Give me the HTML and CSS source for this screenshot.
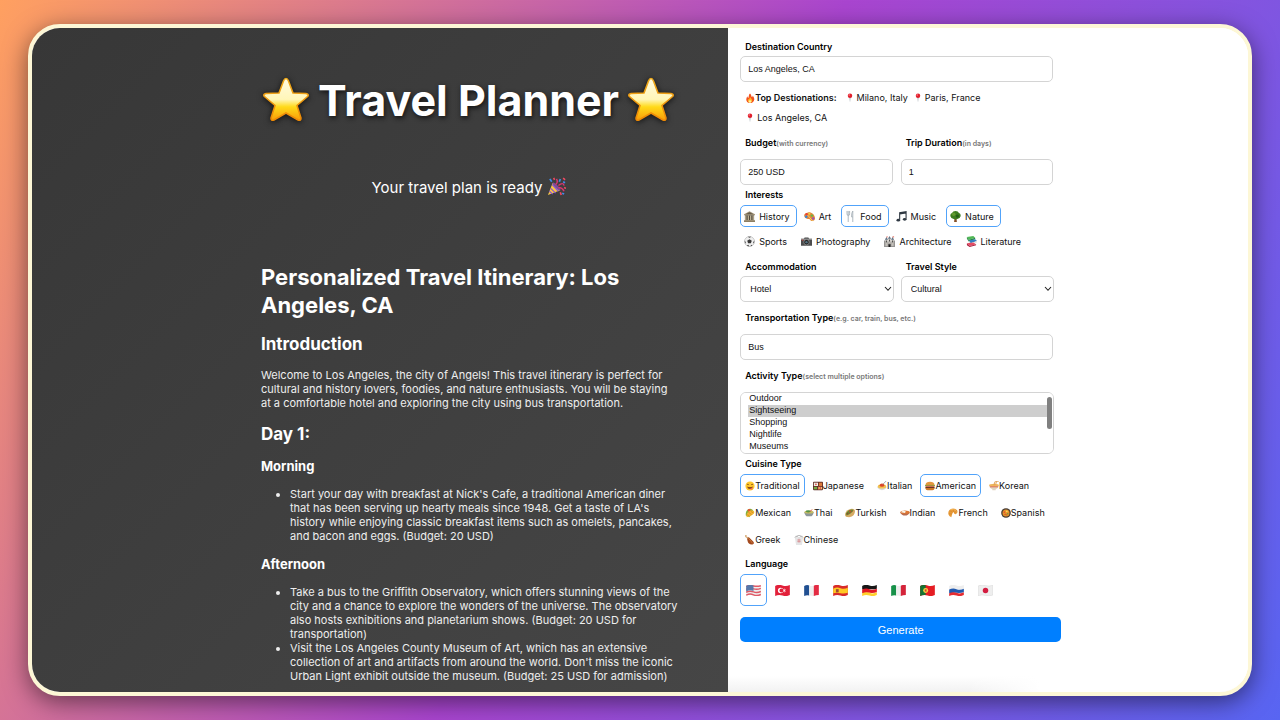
FILE: index.html
```html
<!DOCTYPE html>
<html lang="en">
<head>
<meta charset="utf-8">
<meta name="viewport" content="width=device-width, initial-scale=1">
<title>Travel Planner</title>
<link rel="stylesheet" href="styles.css">
</head>
<body>
<svg class="sprite" aria-hidden="true">
<defs>
<linearGradient id="gold" x1="0" y1="0" x2="0" y2="1"><stop offset="0" stop-color="#fffbe0"/><stop offset=".5" stop-color="#fff6b8"/><stop offset=".68" stop-color="#ffda19"/><stop offset="1" stop-color="#f99c08"/></linearGradient>
<linearGradient id="rim" x1="0" y1="0" x2="0" y2="1"><stop offset="0" stop-color="#eda91b"/><stop offset="1" stop-color="#ef8a05"/></linearGradient>
</defs>
<symbol id="star" viewBox="0 0 48 48"><path d="M24 2.500Q25.500 2.500 26.500 5L31 17 44 17.500Q48 18.500 45 21L35 29.500 39 42Q39 45 36 44L24 37 12 44Q9 45 9 42L13 29.500 3 21Q0 18.500 4 17.500L17 17 21.500 5Q22.500 2.500 24 2.500Z" fill="url(#gold)" stroke="url(#rim)" stroke-width="1.600"/></symbol>
<symbol id="party" viewBox="0 0 20 20"><path d="M1 19 6 6 14 14Z" fill="#f6c445"/><path d="M4 12 9 17M5.500 8 12 15M2.500 15 6 18" stroke="#8a55d7" stroke-width="1.300"/><ellipse cx="10" cy="10" rx="1.500" ry="5.500" transform="rotate(-45 10 10)" fill="#7a4a9c"/><path d="M9 8Q12 6 10 2M12 9Q17 5 18 9M12 11Q16 11 18 15" stroke="#d73570" stroke-width="1.500" fill="none"/><path d="M3 2 5 5M14 2 13 5M17 5 19 6M16 17 18 18" stroke="#3f8bea" stroke-width="1.800"/><path d="M7 1 8 3M17 1 19 3M14 16 15 19M18 11 20 12" stroke="#f04a62" stroke-width="1.700"/></symbol>
<symbol id="fire" viewBox="0 0 12 12"><path d="M6 .5C8 2 7 4 8.500 5Q9.500 4 9 3C14 9 9 12 6 12 1 12 .5 7 3 4Q3 6 4 6C5 4 4 2 6 .5Z" fill="#f4511e"/><path d="M6 4C6 6 9 7 8.500 9.500 8 12 4 12 3.500 9.500 3 8 4 7 4.500 7.500Q6 7 6 4Z" fill="#ffb928"/><ellipse cx="6" cy="10.200" rx="1.500" ry="1.500" fill="#fff0a0"/></symbol>
<symbol id="pin" viewBox="0 0 12 12"><path d="M5.400 5H6.600L6 11.500Z" fill="#87919a"/><circle cx="6" cy="3.200" r="2.700" fill="#e0202d"/><circle cx="5" cy="2.300" r=".9" fill="#ff8790"/></symbol>
<symbol id="museum" viewBox="0 0 12 12"><path d="M0 3.500 6 .3 12 3.500V4.500H0Z" fill="#a3957a"/><path d="M1.500 3.500 6 1.300 10.500 3.500Z" fill="#665c4a"/><path d="M1 4.500H11V10H1Z" fill="#51483b"/><path d="M2 5V10M4.700 5V10M7.300 5V10M10 5V10" stroke="#c8bd9e" stroke-width="1.300"/><path d="M0 10H12V12H0Z" fill="#9c8c6c"/><path d="M0 11H12" stroke="#655b48" stroke-width=".5"/></symbol>
<symbol id="art" viewBox="0 0 12 12"><path d="M4.500 1.500C8 1 12 4 12 8 12 11.500 8 11.500 7 10 6 7.500 4 9.500 2 8-1 6-.5 2 4.500 1.500Z" fill="#e08a3c"/><circle cx="2.800" cy="3.600" r="1.300" fill="#ee4034"/><circle cx="5.800" cy="3" r="1.200" fill="#f7d13b"/><circle cx="2.500" cy="6.300" r="1.300" fill="#3484dc"/><circle cx="8.600" cy="5" r="1.300" fill="#61b94a"/><circle cx="10" cy="8.200" r="1.300" fill="#a050b6"/><path d="M4 4.500 9.500 11" stroke="#f5ce65" stroke-width="1"/></symbol>
<symbol id="fork" viewBox="0 0 12 12"><path d="M2.200 0V3Q2.200 5 3.500 5V12M3.500 0V5Q5 5 5 3V0M8.500 12V0Q7 2 7.200 6.500H8.500" fill="none" stroke="#a7b1b9" stroke-width="1"/></symbol>
<symbol id="music" viewBox="0 0 12 12"><path d="M4 9.500V2L11 .8V8.500M4 3.200 11 2" fill="none" stroke="#303943" stroke-width="1.200"/><ellipse cx="2.500" cy="10" rx="2" ry="1.500" fill="#303943"/><ellipse cx="9.500" cy="9" rx="2" ry="1.500" fill="#303943"/></symbol>
<symbol id="tree" viewBox="0 0 12 12"><path d="M5 7H7L7.500 12H4.500Z" fill="#855027"/><path d="M6 0Q9 0 9.500 2 12 3 11.700 5.500 11 8.500 8 8.700 6 9.700 4 8.700 1 8.500.3 5.500 0 3 2.500 2 3 0 6 0Z" fill="#3d7d21"/><circle cx="4" cy="3.500" r="2" fill="#629b30"/><circle cx="8" cy="5.500" r="1.800" fill="#245f16"/></symbol>
<symbol id="ball" viewBox="0 0 12 12"><circle cx="6" cy="6" r="5.500" fill="#eee" stroke="#aaa" stroke-width=".6"/><path d="M6 3.500 8.500 5.300 7.500 8H4.500L3.500 5.300ZM4 .8H8L6 2ZM.7 5 2 6.800 1.200 8.500ZM11.300 5 10 6.800 10.800 8.500ZM3 10.500 4.500 9.500 6 11.500ZM9 10.500 8 9.500 7 11.300Z" fill="#383838"/></symbol>
<symbol id="camera" viewBox="0 0 12 12"><path d="M0 3H3L4 1.500H8L9 3H12V10.500H0Z" fill="#4c4c4d"/><path d="M0 3.500H12" stroke="#aaa"/><circle cx="6" cy="6.700" r="3" fill="#222" stroke="#aaa" stroke-width=".7"/><circle cx="6" cy="6.700" r="1.300" fill="#537282"/><path d="M1 4.500H2.500" stroke="#e14640"/></symbol>
<symbol id="castle" viewBox="0 0 12 12"><path d="M0 5H2V6H10V5H12V12H0Z" fill="#969493"/><path d="M1.500 3H4V11H1.500ZM8 3H10.500V11H8ZM4.700 1.800H7.300V12H4.700Z" fill="#c4c0ba"/><path d="M1 4 2.700 1 4.300 4ZM7.700 4 9.300 1 11 4ZM4.400 3 6 0 7.600 3Z" fill="#627487"/><path d="M2.700 5V7M9.300 5V7M6 4V6M5.200 12V9H6.800V12" stroke="#444"/><path d="M2.700 1H4M9.300 1H11" stroke="#d94734"/></symbol>
<symbol id="books" viewBox="0 0 12 12"><path d="M1 1 8 0 10 2 3 4Z" fill="#50b956"/><path d="M1 1V3L3 6 10 3.500V2L3 4Z" fill="#278841"/><path d="M3 5 10 3.500 12 5.500 5 8Z" fill="#347fc2"/><path d="M3 5V7L5 9.500 12 7V5.500L5 8Z" fill="#e6e5df"/><path d="M1 8 8 7 11 9 4 11Z" fill="#e64b63"/><path d="M1 8V10L4 12 11 10V9L4 11Z" fill="#a81e3e"/></symbol>
<symbol id="smile" viewBox="0 0 12 12"><circle cx="6" cy="6" r="5.500" fill="#ffc62c"/><path d="M2.500 4.500Q3.500 3 4.500 4.500M7.500 4.500Q8.500 3 9.500 4.500" fill="none" stroke="#70421b"/><path d="M2.500 6.500Q6 8 9.500 6.500 9 9.500 6 9.500 3 9.500 2.500 6.500Z" fill="#8a4a1a"/><path d="M6.500 9Q8.500 7.500 9 8.500 9 10.500 7 10.500Z" fill="#f35b67"/></symbol>
<symbol id="bento" viewBox="0 0 12 12"><rect y="1" width="12" height="10" rx="1" fill="#602c25"/><path d="M1 2H6V6H1Z" fill="#efede5"/><circle cx="3.500" cy="4" r="1" fill="#db3935"/><path d="M7 2H11V6H7Z" fill="#dc793b"/><path d="M1 7H5V10H1Z" fill="#73ac46"/><path d="M6 7H11V10H6Z" fill="#f0bd73"/><path d="M7 7V10M9 7V10" stroke="#e64d40"/></symbol>
<symbol id="pasta" viewBox="0 0 12 12"><path d="M0 7H12Q10 11 6 11 2 11 0 7Z" fill="#d9d9d9"/><ellipse cx="6" cy="6.500" rx="5" ry="2.500" fill="#f1c14c"/><ellipse cx="6" cy="5" rx="2.700" ry="2" fill="#d94429"/><path d="M7 4 11 0" stroke="#999"/></symbol>
<symbol id="burger" viewBox="0 0 12 12"><path d="M.5 5Q1 1 6 1 11 1 11.500 5Z" fill="#e4963d"/><path d="M.5 8H11.500V9Q11 11 9 11H3Q1 11 .5 9Z" fill="#ce7929"/><path d="M0 5.300H12" stroke="#76ad36" stroke-width="1.200"/><path d="M.5 7.500H11.500" stroke="#69371f" stroke-width="1.800"/><path d="M1 6.200H11" stroke="#e44831"/></symbol>
<symbol id="noodles" viewBox="0 0 12 12"><path d="M0 5H12Q11 9 8 10V11H4V10Q1 9 0 5Z" fill="#e1d4bf"/><ellipse cx="6" cy="5" rx="5.800" ry="1.800" fill="#efb65b"/><path d="M6 5 7 1 12 0M8 4 9 1" fill="none" stroke="#dd9a4a"/><path d="M1 7H11" stroke="#d85e55"/></symbol>
<symbol id="taco" viewBox="0 0 12 12"><path d="M1 9C0 3 5-1 9 2L11 5 5 11Z" fill="#83af3c"/><circle cx="5" cy="3" r="1.700" fill="#e45137"/><path d="M2 11C1 6 5 3 8 3 12 3 12 6 9 8Q6 10 2 11Z" fill="#f2b632"/><path d="M2 8 5 9M4 5 8 8M7 4 10 6" stroke="#d38a20"/></symbol>
<symbol id="thai" viewBox="0 0 12 12"><path d="M0 5H12Q10 10 8 10H4Q2 10 0 5Z" fill="#8d969b"/><ellipse cx="6" cy="5" rx="5.500" ry="1.700" fill="#c6bc62"/><ellipse cx="5" cy="4" rx="3" ry="1.400" fill="#559345"/><path d="M7 4 10 2" stroke="#d94931"/></symbol>
<symbol id="kebab" viewBox="0 0 12 12"><path d="M0 8Q1 2 8 1 12 1 12 4 12 10 5 11 0 11 0 8Z" fill="#d5aa63"/><path d="M1 7Q4 1 10 2 8 7 2 9Z" fill="#648e35"/><circle cx="6" cy="4" r="1.300" fill="#c94e32"/><circle cx="3" cy="6.500" r="1" fill="#874f25"/><path d="M2 8 10 3" stroke="#896031"/></symbol>
<symbol id="curry" viewBox="0 0 12 12"><path d="M0 5H12Q10 9 6 9 2 9 0 5Z" fill="#b56b50"/><ellipse cx="6" cy="5" rx="5.500" ry="2" fill="#de7733"/><path d="M1 5Q3 2 7 4L6 6Z" fill="#f8f5e9"/></symbol>
<symbol id="croissant" viewBox="0 0 12 12"><path d="M2 10C-2 5 2 0 7 1 11 1 13 5 10 7 9 8 7 7 7 5 5 5 5 8 4 11Z" fill="#e79a38"/><path d="M2 3 5 5M6 1 7 5M10 3 8 6M1 7 5 7" stroke="#d5852c" stroke-width=".8"/><path d="M3 2Q7 0 10 4" fill="none" stroke="#f5b95a"/></symbol>
<symbol id="paella" viewBox="0 0 12 12"><circle cx="6" cy="6" r="5.800" fill="#443a34"/><circle cx="6" cy="6" r="4.200" fill="#e79529"/><circle cx="4" cy="5" r="1" fill="#e85330"/><circle cx="7" cy="4" r="1.100" fill="#f7d55d"/><circle cx="8" cy="7" r="1" fill="#739540"/><path d="M4 8Q6 6 7 9" fill="none" stroke="#ca452d"/></symbol>
<symbol id="greek" viewBox="0 0 12 12"><path d="M2 2Q5 2 8 6 13 10 9 11.500 4 12 3 7Z" fill="#a34a1f"/><path d="M4 4 6 6 9 10" stroke="#d08040" fill="none"/><path d="M0 1 3.500 4M0 1 2 0" stroke="#d9b384" stroke-width="1.500"/></symbol>
<symbol id="takeout" viewBox="0 0 12 12"><path d="M1 3H11L9.500 12H2.500Z" fill="#e5e5e6"/><path d="M1 3 3 1 5 3M7 3 9 1 11 3M2 3Q6-2 10 3" fill="none" stroke="#aaa"/><path d="M4 6H8M6 4.500V9M4 8H8" stroke="#d98c8f"/></symbol>
<symbol id="us" viewBox="0 0 16 12"><path d="M0 1Q4-1 8 .5T16 0V11Q12 13 8 11.500T0 12Z" fill="#eee"/><path d="M0 1.500Q4 0 8 1T16 .8M0 4.700Q4 3 8 4.200T16 3.700M0 7.900Q4 6 8 7.500T16 7M0 11.100Q4 9 8 10.700T16 10.300" fill="none" stroke="#df5966" stroke-width="1.600"/><path d="M0 1Q4-1 8 .5V6.500Q4 5 0 7Z" fill="#5777a9"/></symbol>
<symbol id="tr" viewBox="0 0 16 12"><path d="M0 1Q4-1 8 .5T16 0V11Q12 13 8 11.500T0 12Z" fill="#e2203a"/><circle cx="6" cy="6" r="3" fill="#fff"/><circle cx="7" cy="6" r="2.300" fill="#e2203a"/><path d="M10 4V8M8.500 5 11.500 7M11.500 5 8.500 7" stroke="#fff" stroke-width=".7"/></symbol>
<symbol id="fr" viewBox="0 0 16 12"><path d="M0 1Q3-.5 5.500.5V11.500Q3 10.500 0 12Z" fill="#204f91"/><path d="M5.500.5Q8 1.500 10.500.7V12Q8 12 5.500 11.500Z" fill="#eee"/><path d="M10.500.7Q13-.5 16 0V11Q13 11 10.500 12Z" fill="#e32b43"/></symbol>
<symbol id="es" viewBox="0 0 16 12"><path d="M0 1Q4-1 8 .5T16 0V11Q12 13 8 11.500T0 12Z" fill="#d82b29"/><path d="M0 4Q4 2 8 3.500T16 3V8.500Q12 10 8 9T0 9Z" fill="#ffc923"/><rect x="3" y="4.500" width="3" height="3.500" fill="#a34a32"/></symbol>
<symbol id="de" viewBox="0 0 16 12"><path d="M0 1Q4-1 8 .5T16 0V4Q12 5 8 4.500T0 5Z" fill="#171717"/><path d="M0 5Q4 3 8 4.500T16 4V8Q12 9 8 8.500T0 9Z" fill="#e11923"/><path d="M0 9Q4 7 8 8.500T16 8V11Q12 13 8 11.500T0 12Z" fill="#ffd02c"/></symbol>
<symbol id="it" viewBox="0 0 16 12"><path d="M0 1Q3-.5 5.500.5V11.500Q3 10.500 0 12Z" fill="#179149"/><path d="M5.500.5Q8 1.500 10.500.7V12Q8 12 5.500 11.500Z" fill="#eee"/><path d="M10.500.7Q13-.5 16 0V11Q13 11 10.500 12Z" fill="#d4243a"/></symbol>
<symbol id="pt" viewBox="0 0 16 12"><path d="M0 1Q4-1 8 .5T16 0V11Q12 13 8 11.500T0 12Z" fill="#e51c23"/><path d="M0 1Q3-.5 6 .2V11Q3 10.500 0 12Z" fill="#147333"/><circle cx="6" cy="6" r="2.700" fill="#f7d643"/><rect x="5" y="4.700" width="2" height="2.500" fill="#d34131"/></symbol>
<symbol id="ru" viewBox="0 0 16 12"><path d="M0 1Q4-1 8 .5T16 0V4Q12 5 8 4.500T0 5Z" fill="#eee"/><path d="M0 5Q4 3 8 4.500T16 4V8Q12 9 8 8.500T0 9Z" fill="#2159af"/><path d="M0 9Q4 7 8 8.500T16 8V11Q12 13 8 11.500T0 12Z" fill="#e52c31"/></symbol>
<symbol id="jp" viewBox="0 0 16 12"><path d="M0 1Q4-1 8 .5T16 0V11Q12 13 8 11.500T0 12Z" fill="#eee" stroke="#ccc" stroke-width=".4"/><circle cx="8" cy="6" r="3" fill="#d31c40"/></symbol>
<symbol id="chevron" viewBox="0 0 8 6"><path d="M1 1 4 4.300 7 1" fill="none" stroke="#222" stroke-width="1.100"/></symbol>
</svg>
<div class="window">
  <main class="plan">
    <h1 class="title"><svg class="star"><use href="#star"/></svg>Travel Planner<svg class="star"><use href="#star"/></svg></h1>
    <p class="ready">Your travel plan is ready <svg class="party"><use href="#party"/></svg></p>
    <article class="itinerary">
      <h2 class="heading">Personalized Travel Itinerary: Los Angeles, CA</h2>
      <h3 class="section">Introduction</h3>
      <p class="text">Welcome to Los Angeles, the city of Angels! This travel itinerary is perfect for cultural and history lovers, foodies, and nature enthusiasts. You will be staying at a comfortable hotel and exploring the city using bus transportation.</p>
      <h3 class="section">Day 1:</h3>
      <h4 class="part">Morning</h4>
      <ul class="stops"><li>Start your day with breakfast at Nick's Cafe, a traditional American diner that has been serving up hearty meals since 1948. Get a taste of LA's history while enjoying classic breakfast items such as omelets, pancakes, and bacon and eggs. (Budget: 20 USD)</li></ul>
      <h4 class="part">Afternoon</h4>
      <ul class="stops"><li>Take a bus to the Griffith Observatory, which offers stunning views of the city and a chance to explore the wonders of the universe. The observatory also hosts exhibitions and planetarium shows. (Budget: 20 USD for transportation)</li><li>Visit the Los Angeles County Museum of Art, which has an extensive collection of art and artifacts from around the world. Don't miss the iconic Urban Light exhibit outside the museum. (Budget: 25 USD for admission)</li></ul>
    </article>
  </main>
  <aside class="side">
    <form class="form">
      <label class="label" for="country">Destination Country</label>
      <input class="field" id="country" type="text" value="Los Angeles, CA">
      <div class="tops">
        <strong class="tops-title"><svg class="icon"><use href="#fire"/></svg>Top Destionations:</strong>
        <a class="place" href="#"><svg class="icon"><use href="#pin"/></svg>Milano, Italy</a>
        <a class="place" href="#"><svg class="icon"><use href="#pin"/></svg>Paris, France</a>
        <a class="place" href="#"><svg class="icon"><use href="#pin"/></svg>Los Angeles, CA</a>
      </div>
      <div class="pair">
        <div class="cell"><label class="label label-tall" for="budget">Budget<small class="hint">(with currency)</small></label><input class="field" id="budget" type="text" value="250 USD"></div>
        <div class="cell"><label class="label label-tall" for="days">Trip Duration<small class="hint">(in days)</small></label><input class="field" id="days" type="text" value="1"></div>
      </div>
      <fieldset class="group">
        <legend class="label label-near">Interests</legend>
        <div class="chips interests">
          <label class="chip"><input class="tick" type="checkbox" checked><svg class="icon"><use href="#museum"/></svg>History</label>
          <label class="chip"><input class="tick" type="checkbox"><svg class="icon"><use href="#art"/></svg>Art</label>
          <label class="chip"><input class="tick" type="checkbox" checked><svg class="icon"><use href="#fork"/></svg>Food</label>
          <label class="chip"><input class="tick" type="checkbox"><svg class="icon"><use href="#music"/></svg>Music</label>
          <label class="chip"><input class="tick" type="checkbox" checked><svg class="icon"><use href="#tree"/></svg>Nature</label>
          <label class="chip"><input class="tick" type="checkbox"><svg class="icon"><use href="#ball"/></svg>Sports</label>
          <label class="chip"><input class="tick" type="checkbox"><svg class="icon"><use href="#camera"/></svg>Photography</label>
          <label class="chip"><input class="tick" type="checkbox"><svg class="icon"><use href="#castle"/></svg>Architecture</label>
          <label class="chip"><input class="tick" type="checkbox"><svg class="icon"><use href="#books"/></svg>Literature</label>
        </div>
      </fieldset>
      <div class="pair">
        <div class="cell"><label class="label" for="stay">Accommodation</label><div class="drop"><select class="field pick" id="stay"><option>Hotel</option></select><svg class="chevron"><use href="#chevron"/></svg></div></div>
        <div class="cell"><label class="label" for="style">Travel Style</label><div class="drop"><select class="field pick" id="style"><option>Cultural</option></select><svg class="chevron"><use href="#chevron"/></svg></div></div>
      </div>
      <label class="label label-tall label-apart" for="transport">Transportation Type<small class="hint">(e.g. car, train, bus, etc.)</small></label>
      <input class="field" id="transport" type="text" value="Bus">
      <label class="label label-tall label-apart" for="activity">Activity Type<small class="hint">(select multiple options)</small></label>
      <div class="list-box">
        <select class="list" id="activity" multiple><option>Outdoor</option><option selected>Sightseeing</option><option>Shopping</option><option>Nightlife</option><option>Museums</option><option>Theme Parks</option><option>Beaches</option><option>Sports</option></select>
      </div>
      <fieldset class="group">
        <legend class="label label-near">Cuisine Type</legend>
        <div class="chips cuisines">
          <label class="chip"><input class="tick" type="checkbox" checked><svg class="icon"><use href="#smile"/></svg>Traditional</label>
          <label class="chip"><input class="tick" type="checkbox"><svg class="icon"><use href="#bento"/></svg>Japanese</label>
          <label class="chip"><input class="tick" type="checkbox"><svg class="icon"><use href="#pasta"/></svg>Italian</label>
          <label class="chip"><input class="tick" type="checkbox" checked><svg class="icon"><use href="#burger"/></svg>American</label>
          <label class="chip"><input class="tick" type="checkbox"><svg class="icon"><use href="#noodles"/></svg>Korean</label>
          <label class="chip"><input class="tick" type="checkbox"><svg class="icon"><use href="#taco"/></svg>Mexican</label>
          <label class="chip"><input class="tick" type="checkbox"><svg class="icon"><use href="#thai"/></svg>Thai</label>
          <label class="chip"><input class="tick" type="checkbox"><svg class="icon"><use href="#kebab"/></svg>Turkish</label>
          <label class="chip"><input class="tick" type="checkbox"><svg class="icon"><use href="#curry"/></svg>Indian</label>
          <label class="chip"><input class="tick" type="checkbox"><svg class="icon"><use href="#croissant"/></svg>French</label>
          <label class="chip"><input class="tick" type="checkbox"><svg class="icon"><use href="#paella"/></svg>Spanish</label>
          <label class="chip"><input class="tick" type="checkbox"><svg class="icon"><use href="#greek"/></svg>Greek</label>
          <label class="chip"><input class="tick" type="checkbox"><svg class="icon"><use href="#takeout"/></svg>Chinese</label>
        </div>
      </fieldset>
      <fieldset class="group group-apart">
        <legend class="label label-near">Language</legend>
        <div class="chips flags">
          <label class="chip"><input class="tick" type="radio" name="lang" aria-label="English" checked><svg class="flag"><use href="#us"/></svg></label>
          <label class="chip"><input class="tick" type="radio" name="lang" aria-label="Turkish"><svg class="flag"><use href="#tr"/></svg></label>
          <label class="chip"><input class="tick" type="radio" name="lang" aria-label="French"><svg class="flag"><use href="#fr"/></svg></label>
          <label class="chip"><input class="tick" type="radio" name="lang" aria-label="Spanish"><svg class="flag"><use href="#es"/></svg></label>
          <label class="chip"><input class="tick" type="radio" name="lang" aria-label="German"><svg class="flag"><use href="#de"/></svg></label>
          <label class="chip"><input class="tick" type="radio" name="lang" aria-label="Italian"><svg class="flag"><use href="#it"/></svg></label>
          <label class="chip"><input class="tick" type="radio" name="lang" aria-label="Portuguese"><svg class="flag"><use href="#pt"/></svg></label>
          <label class="chip"><input class="tick" type="radio" name="lang" aria-label="Russian"><svg class="flag"><use href="#ru"/></svg></label>
          <label class="chip"><input class="tick" type="radio" name="lang" aria-label="Japanese"><svg class="flag"><use href="#jp"/></svg></label>
        </div>
      </fieldset>
      <button class="generate" type="button">Generate</button>
    </form>
  </aside>
</div>
</body>
</html>
```
FILE: styles.css
```css
* { box-sizing: border-box; }
body {
  margin: 0;
  height: 100vh;
  padding: 24px 28px;
  overflow: hidden;
  font-family: Inter, "Liberation Sans", sans-serif;
  background: linear-gradient(120deg, #ffa060, #a945cf 50%, #5865f2);
}
.sprite { position: absolute; width: 0; height: 0; }
.window {
  display: grid;
  grid-template-columns: 57.25% 1fr;
  height: 100%;
  overflow: hidden;
  border: 4px solid #fdf7d6;
  border-radius: 32px;
  background: #fff;
  box-shadow: 0 6px 24px rgba(0, 0, 0, .5);
}
.plan {
  min-height: 0;
  overflow: hidden;
  padding: 44px 48px 0 229px;
  color: #fff;
  background: linear-gradient(135deg, #373737, #464646);
}
.title {
  display: flex;
  align-items: center;
  justify-content: center;
  gap: 8px;
  margin: 0;
  padding-right: 4px;
  font-size: 43px;
  line-height: 56px;
  white-space: nowrap;
  text-shadow: 1px 2px 5px #111;
}
.star { flex: none; width: 48px; height: 48px; filter: drop-shadow(0 1px 3px #111); }
.ready {
  margin: 48px 0 0;
  padding-right: 4px;
  font-size: 15px;
  line-height: 24px;
  text-align: center;
}
.party { width: 19px; height: 19px; vertical-align: -3px; }
.itinerary { margin-top: 63px; }
.heading { margin: 0 0 15px; font-size: 22px; line-height: 28px; }
.section { margin: 14px 0 13px; font-size: 17px; line-height: 21px; }
.text { margin: 0; font-size: 11px; line-height: 14px; color: #eee; }
.part { margin: 14px 0 13px; font-size: 13px; line-height: 15px; }
.stops { margin: 0; padding-left: 29px; font-size: 11px; line-height: 14px; color: #eee; }
.side {
  min-height: 0;
  overflow: hidden;
  padding: 12px;
  background:
    linear-gradient(to right, transparent 240px, #fff 312px),
    linear-gradient(to top, #f2f2f2, #fff 16px);
}
.form { width: 321px; font-size: 9px; color: #111; }
.label { display: block; padding: 0 5px; font-size: 9px; font-weight: 600; line-height: 14px; margin-bottom: 2px; color: #000; }
.label-tall { margin-bottom: 9px; }
.label-near { margin-bottom: 3px; }
.label-apart { padding-top: 9px; }
.hint { font-size: 7px; line-height: 7px; color: #777; }
.field {
  display: block;
  width: calc(100% - 8px);
  height: 26px;
  padding: 0 7px;
  border: 1px solid #d4d4d4;
  border-radius: 5px;
  background: #fff;
  color: #111;
  font: 9px/12px "Liberation Sans", Arial, sans-serif;
}
.tops { display: flex; flex-wrap: wrap; padding: 6px 5px 0; line-height: 20px; }
.tops-title { display: flex; align-items: center; margin-right: 8px; font-weight: 600; }
.place { display: flex; align-items: center; gap: 2px; margin-right: 5px; color: #111; text-decoration: none; }
.icon { flex: none; width: 11px; height: 11px; }
.tops .icon { width: 10px; height: 10px; }
.pair { display: grid; grid-template-columns: 1fr 1fr; padding-top: 8px; }
.cell { min-width: 0; }
.group { margin: 3px 0 0; padding: 0; border: 0; min-width: 0; }
.group-apart { margin-top: 6px; }
.chips { display: flex; flex-wrap: wrap; gap: 3px; }
.chip {
  position: relative;
  display: flex;
  align-items: center;
  height: 22px;
  border: 1px solid transparent;
  border-radius: 5px;
}
.chip:has(.tick:checked) { border-color: #51a3fa; }
.tick { position: absolute; inset: 0; margin: 0; opacity: 0; }
.interests { padding-right: 12px; }
.interests .chip { gap: 4px; padding: 0 6px 0 3px; }
.cuisines { gap: 4px 3px; }
.cuisines .chip { height: 23px; padding: 0 4px; }
.cuisines .icon { width: 10px; height: 10px; }
.flags { gap: 2px; }
.flags .chip { width: 27px; height: 32px; justify-content: center; }
.flag { width: 15px; height: 11px; }
.drop { position: relative; }
.pick { width: calc(100% - 7px); padding: 0 9px; appearance: none; }
.chevron { position: absolute; top: 10px; right: 9px; width: 8px; height: 6px; pointer-events: none; }
.list-box { position: relative; width: calc(100% - 7px); }
.list-box::after {
  content: "";
  position: absolute;
  top: 5px;
  right: 2px;
  width: 5px;
  height: 32px;
  border-radius: 3px;
  background: #808080;
}
.list {
  display: block;
  width: 100%;
  height: 62px;
  padding: 0 6px 0 7px;
  border: 1px solid #d4d4d4;
  border-radius: 6px;
  outline: 0;
  background: #fff;
  color: #111;
  font: 9px/12px "Liberation Sans", Arial, sans-serif;
}
.list option { height: 12px; min-height: 12px; padding: 0 1px; line-height: 12px; }
.list option:checked { background: #cecece linear-gradient(#cecece, #cecece); color: #111; }
.generate {
  display: block;
  width: 100%;
  height: 25px;
  margin-top: 11px;
  border: 0;
  border-radius: 5px;
  background: #007fff;
  color: #fff;
  font: 11px/16px "Liberation Sans", Arial, sans-serif;
}
```
